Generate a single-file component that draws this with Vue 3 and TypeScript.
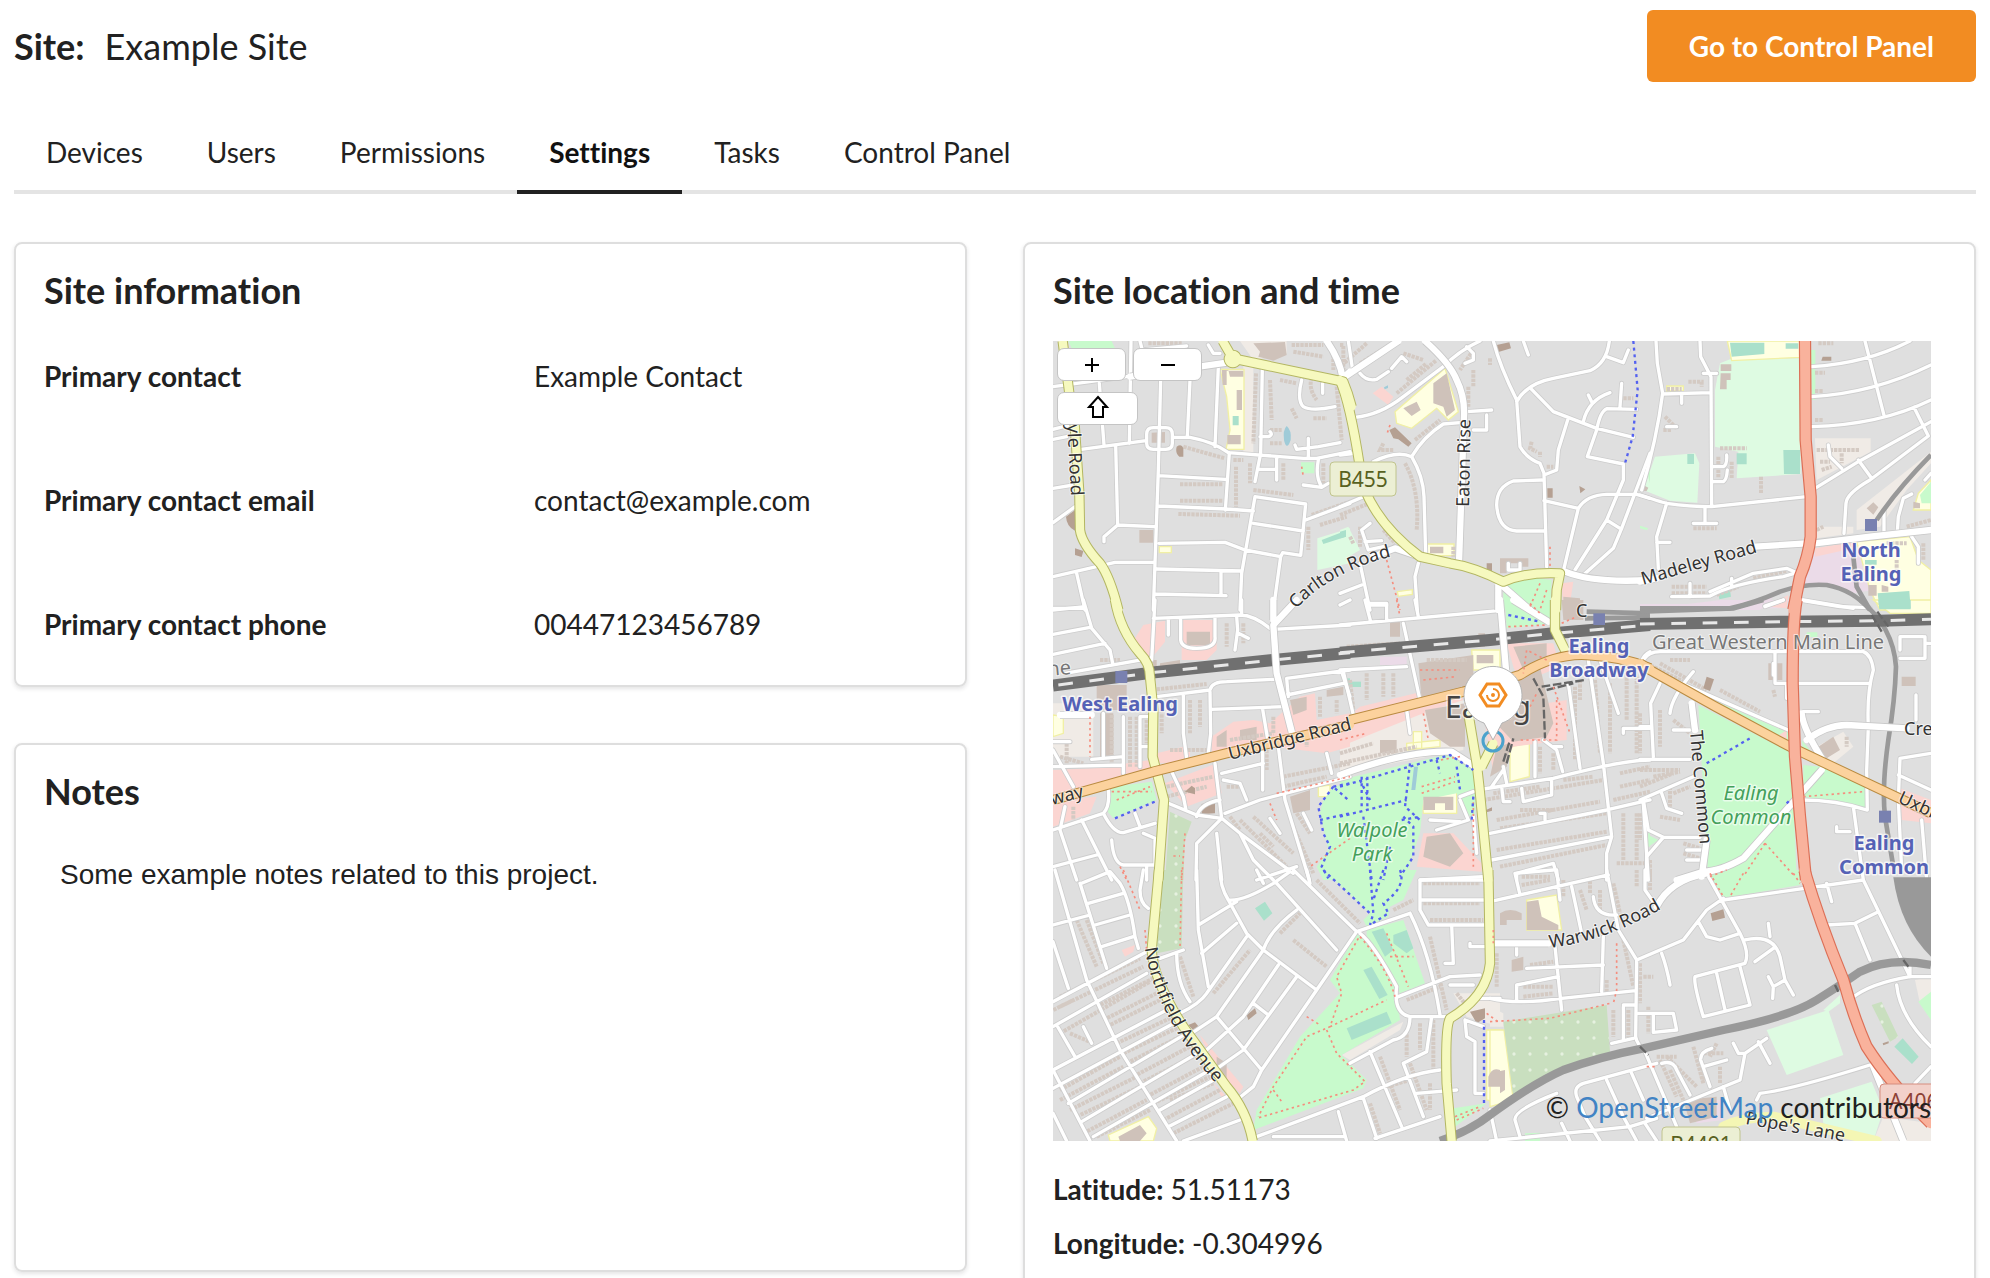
<script setup lang="ts">
import { ref } from 'vue'

const tabs: string[] = ['Devices', 'Users', 'Permissions', 'Settings', 'Tasks', 'Control Panel']
const active = ref('Settings')

const contact: { label: string; value: string }[] = [
  { label: 'Primary contact', value: 'Example Contact' },
  { label: 'Primary contact email', value: 'contact@example.com' },
  { label: 'Primary contact phone', value: '00447123456789' },
]

const notes = ref('Some example notes related to this project.')

// Drawing order of the base map, bottom to top.
const layers: string[] = [
  'land', 'lilac', 'pale', 'school', 'park', 'orchard', 'pitch', 'retail', 'water', 'building', 'terrace', 'landmark',
  'minor-case', 'minor', 'rail', 'mainline', 'mainline-dash', 'yard', 'street-case', 'street',
  'secondary-case', 'secondary', 'primary-case', 'primary', 'trunk-case', 'trunk',
  'footway', 'cycleway', 'station',
]

// The map is cut into sheets; every sheet holds one path per layer in its own coordinates.
interface Sheet {
  x: number
  y: number
  paths: Record<string, string>
}

const sheets: Sheet[] = [
  {
    x: -39,
    y: -33,
    paths: {
      park: 'M85 33H215L225 55H95ZM783 397h40v33h-40Z',
      pale: 'M832 625L930 595V700L832 720Z',
      land: 'M600 33H740V70L640 90ZM610 90H640V370H610Z',
      school: 'M540 118H612V358H558L570 300L560 200ZM358 650h36v18h-36Z',
      pitch: 'M845 630L915 603L918 620L850 642ZM578 258h18v28h-18Z',
      water: 'M740 288Q755 300 752 330Q740 365 732 330Q728 300 740 288Z',
      building:
        'M640 40L735 36L740 75L700 92L655 80L660 65ZM298 600h42v38h-42ZM545 120H565L570 140H610V122H560V165H548ZM590 180h16v60h-16ZM562 315h40v28h-40ZM335 308l40-2v32h-40Z',
      terrace:
        'M755 45H850M760 65L850 80M648 130L640 340M690 150L695 270M820 130Q800 170 830 210M890 170L905 330M430 350Q500 370 555 385M420 463H550M420 512H550M415 552L600 557M588 410V530M640 480L760 495M805 590V660M690 300H725M690 340H725M580 390H610M815 555L930 515M840 585L920 560M720 150L770 160M820 265h40M730 400v50M850 400v60M755 235l15 30M880 60v60M630 400v60M325 40h100',
      landmark: 'M78 560L105 540V602Q80 590 78 560ZM410 350q15-10 20 5v25h-12Q405 370 410 350ZM105 655l25 8l-5 18l-20-6Z',
      minor:
        'M39 170L550 100M273 33L268 340M362 150L355 420L340 840M450 150L442 320M178 160L192 345M124 358L318 332M340 293H377Q397 293 397 313V340Q397 358 377 358H340Q320 358 320 340V313Q320 293 340 293M397 322H450Q520 335 565 368L790 385H830L930 365M535 110L525 350M227 345L233 585L345 590M355 437L556 448M568 368L556 540M355 528L560 537L640 543M357 640L555 637L615 660L722 680L728 668L782 676L797 522L645 500L605 730L600 840M640 580L790 603M797 570L930 520M722 680L700 840M350 717L605 723M345 792L558 797M543 725V795M39 740L225 697H345M110 730L135 840M39 578L105 530M233 585L192 620V635M39 328L80 320M39 475L100 465M667 115L662 370L645 455M660 320H685Q700 315 690 305M655 418H710M710 380V450M805 325V385M765 345L770 358L835 350L900 338M835 390Q825 440 845 470M790 465L845 472L865 460M785 150Q770 210 790 230Q815 245 885 230M848 160V190M300 33L308 65M308 60L440 48M505 45L520 70H540M39 835L135 835M39 298L90 285',
      street: 'M860 33Q900 90 908 145L930 125M270 140L560 98',
      secondary:
        'M548 33L578 85L910 155Q925 190 935 230M68 33L88 190M104 285L118 490L120 600Q125 640 180 700Q210 740 235 840M578 75a12 12 0 1 0 1 0',
      footway: 'M785 410L790 440',
    },
  },
  {
    x: 861,
    y: -33,
    paths: {
      park: 'M490 770L560 740L635 750L630 840H490ZM920 420L930 400V460Z',
      pale: 'M0 600L25 590L60 660L0 695Z',
      pitch: 'M0 605L18 600V620L0 625Z',
      retail: 'M98 190L125 170L160 200L145 225ZM665 760L700 755L690 820L670 840Z',
      school: 'M165 245L315 115L355 245L325 270L290 235L215 295L170 280ZM262 642h80v35h-80ZM172 785l45-6v14l-42 6Z',
      water: 'M132 172l12-6v8l-10 4Z',
      building:
        'M280 160L320 130L345 240L320 260L310 230L280 220ZM190 235L230 215L242 240L215 258ZM270 650h40v20h-40ZM480 685H565V710H545V700H500V730H480ZM670 800L720 805V840H670Z',
      terrace:
        'M80 40L0 110M60 100L170 33M170 190L290 90M225 330L300 270M195 400Q240 480 230 600M0 555L100 515M60 590V650M130 600L165 640M340 650v30M130 340l-10 20h40M400 120v50M385 170v60M400 60l-40 60M450 85v20M850 205h30M575 335l-5 20l20 10M600 365v15M620 410h20M0 45H10V130M190 70L250 90M200 150l60-50M30 620l10 20',
      landmark: 'M148 300L165 292L215 340L205 350L175 328L160 325ZM470 45l38-8l5 18l-40 12ZM622 475h16v28h-16ZM718 468l18 10l-15 12ZM440 700h16v26h-16Z',
      minor:
        'M25 33L38 120M45 262Q120 255 190 200L310 110Q360 60 420 33M60 130Q80 155 110 148L145 125M215 380Q250 440 252 500L257 670M0 375L45 370M100 395Q170 360 215 380Q250 320 310 282L360 278M0 530L70 500M380 245L455 240M440 255V300H400M460 33Q480 110 530 210L540 350Q560 385 600 400L612 430L620 710M530 215Q560 160 640 145L750 122Q800 100 808 33M800 80L850 98L865 60M572 175L640 245L770 295L880 322M745 195L755 215M730 275Q745 210 810 188M845 160L840 230M890 238L800 236Q780 245 770 300L742 380L850 402V450L800 570L705 720M683 270L655 360L650 420L612 435M605 450L520 453Q470 470 470 525Q475 600 530 603H615M612 512L715 535Q740 495 800 493H890L930 505M715 535L672 715M930 370L845 595L820 655L730 735M800 570L840 595M60 700L90 840M235 700L225 740L232 840M0 790L65 765M90 580L65 600L85 660L130 650M75 635L125 632M155 115L185 80L200 95M550 33L565 75M375 100L400 90V70L380 50M505 700V720H540V700M85 825H140',
      street: 'M0 150L175 33M255 33Q330 100 350 150Q375 200 372 260L357 700M240 680L165 655L100 680M475 765V840M675 725Q760 760 930 750M490 770L570 840',
      secondary: 'M0 150Q30 220 58 400L75 480Q120 590 240 680L330 700Q400 710 490 755Q560 725 660 730L650 780L648 840',
      footway: 'M140 690L180 840M630 650V710M600 760L570 830M620 780L600 840M150 285l-10 30',
      cycleway: 'M880 33L893 180L878 320L855 400',
    },
  },
  {
    x: 1761,
    y: -33,
    paths: {
      land: 'M525 325H692V365L530 450ZM873 365L650 540V600L720 590L800 480L873 400ZM530 590H640V610L530 625Z',
      lilac: 'M520 670L650 655L700 780L640 790L560 765L480 760L510 720ZM0 822H260L400 800L360 840H0Z',
      retail: 'M525 655L645 635L640 655L525 680ZM385 825L445 795L440 830Z',
      pale: 'M240 100L270 88L480 85L482 432L290 445L295 365L225 350V180ZM45 380L165 370L178 400L172 518L90 512L10 480Z',
      school: 'M262 33H480V82L275 92ZM650 635L810 620L835 690L873 720V840H720L690 780ZM835 490L873 450V540H820ZM80 168h50v15h-50Z',
      park: 'M840 495L873 455V520H845ZM0 587l25 8l-5 6l-20-6ZM512 60h14v150h-10Z',
      pitch: 'M270 38H373V72L275 80ZM437 40h38v16h-38ZM430 360h50v72h-48ZM142 372h20v30h-20ZM290 370h30v33h-30ZM713 790L808 783L812 835H718ZM675 690h35v14h-35ZM235 785l35-5l3 20l-35 8Z',
      building: 'M242 103h32v20h-32ZM242 130h30v20h-12v28h-20ZM680 535l20-18l15 15l-15 22ZM685 765h25v32h-25ZM725 765l20 5v15h-20ZM10 465l15 8l-5 10h-12ZM820 515l20 5v15h-20Z',
      terrace: 'M80 177H125M145 155H185V170M75 260L110 295M70 300H95M530 360H660M540 395H570M605 370V400M545 420l30-10M160 595H230M95 770H200M340 745L440 722M230 795L295 770M95 790H200M235 380V445M275 395V445M240 355H320M525 128h30M525 183h25M525 270h25M535 40h45M363 440v50M800 590L873 570M740 640H800M770 690v30M850 640V690M700 720v30M530 600l20-10',
      landmark: 'M548 80h26v12h-30Z',
      minor:
        'M48 33L52 100L68 190Q50 330 5 480M180 33L182 80L213 140L215 530M68 192L213 188M125 195V220M0 495Q60 515 80 520Q150 530 215 530L500 500M80 520L50 620L55 715M50 637H90M195 535V575M160 580H230M215 410H250Q262 405 260 375M215 455H250Q260 450 262 420M515 110Q680 100 810 33M515 200Q700 190 873 105M515 290Q720 285 873 210M675 33L733 260M822 232L865 318L690 450Q620 490 618 520L612 610M525 475L655 395L873 275M655 390L695 445M565 345L570 380L605 415M95 800L210 798Q280 760 430 740L470 728L440 715L340 730L210 785M375 828L430 810M772 605L775 560L790 505L815 492M815 620L835 650V700M480 810L600 830L690 833M150 760V800M275 745V770M190 130H230M855 450L873 430M732 540V605M80 290H110',
      rail: 'M0 835H270Q340 820 420 785Q490 760 560 765Q640 780 690 840M873 375Q770 480 710 570M640 680L650 770L690 840',
      street: 'M0 755L50 745M345 650L500 640H525L690 620L873 600',
      trunk: 'M495 33L497 330L512 500V620Q505 680 480 740L460 840',
      station: 'M675 567h36v36h-36Z',
    },
  },
  {
    x: -39,
    y: 777,
    paths: {
      land: 'M39 310H160V470H39Z',
      retail:
        'M275 130L310 75L375 62V125L330 180ZM425 60H530V150L500 180H425ZM39 510L160 505L330 480L340 500L39 600ZM350 460L430 440L450 450V490H350ZM515 410L580 365L640 360L690 370L780 290L825 280L830 360L930 340V440L860 460L700 440L515 460ZM375 550L530 490L545 580L440 620ZM39 600L170 590L150 640L39 680Z',
      school: 'M39 345L70 350V400L39 410ZM835 560L870 555V590H835Z',
      park: 'M215 560L335 545L350 600L220 655L203 635ZM850 600L880 560L930 550V840H850L830 800L865 750L840 640Z',
      orchard: 'M390 635L455 665L435 720L430 840H375Z',
      pitch: 'M920 235h10v30h-10Z',
      building:
        'M440 95h70v40h-70ZM170 255H260V330H170ZM750 590L810 570V630L760 640ZM180 400V340H220V480H180ZM360 190L420 180V210L360 215ZM530 410L560 390V440H530ZM600 390L650 380V420H600ZM750 300L800 290V330L760 345ZM860 270L910 260V285L860 290ZM330 180h20v30h-20Z',
      terrace:
        'M215 345V490M270 350V500M290 350V500M320 360V430M365 330V400M450 300V400M480 300V380M560 70V140M610 70V130M350 268L500 252M570 420L700 400M600 660L740 800M640 650L760 760M730 530L930 490M760 680L820 820M80 430V490M380 560L520 530M380 590L500 560M660 700L700 740M570 650L600 690M730 560L860 530M60 470L130 490M390 450H500M800 400V440M840 290V350M890 300V340M700 350V400M180 180H240M560 560h50M680 450v60M770 640L810 700M100 620V660',
      landmark: 'M485 612L525 605V640L485 642ZM435 575l20-18l10 8v18Z',
      minor:
        'M39 30L135 20M130 0L155 85L210 150L218 190M39 103L150 82M39 163L195 130M345 0L335 180M340 55L600 45Q640 45 690 85M605 0V45M385 60V105M422 60V120Q425 145 470 145Q530 145 525 110V55M590 50L593 90L585 150M595 100L625 115M75 220L330 175M350 290L510 270Q515 245 560 245L700 238M430 285V400L440 475M510 275L512 400L505 460M515 328L730 320M668 328L685 430M668 440V570M190 340V470M250 350V520M300 350V500M300 350H325M300 440H325M155 478L250 470M250 495L39 500M39 450L100 560M39 690L190 640Q210 620 205 570M190 640Q220 700 250 698L345 670M215 720Q220 790 250 795H345V715L310 700M60 690L110 840M125 660L215 840M39 800L170 765M320 800V840M285 640L300 680M385 610L470 645L545 655L470 730L468 840M395 515L430 590L438 630M525 490L545 655L600 700L760 820M600 700L640 780L700 840M530 700L545 840M650 840L770 800M545 520L670 490M550 540L600 550L620 600M470 650Q480 610 540 600M555 640L660 600L930 530M715 440L735 600L808 840M745 290L740 235L930 210M740 285L910 250M905 215L930 290M860 460L875 520M690 655L720 700M700 88L930 75M39 425H90M60 690L75 620M790 640L815 690',
      street: 'M700 0V60M770 0L700 75L710 220L755 395M60 345H155',
      mainline: 'M39 257L345 217L700 180L930 158',
      'mainline-dash': 'M55 255L345 217L700 180L930 158',
      secondary: 'M225 0Q240 90 300 160Q330 190 330 230L340 330L338 470L372 600L355 840',
      primary: 'M39 600L340 515L560 460L930 375',
      footway: 'M150 350V470M215 575H335M230 600L330 560M435 700L425 840M690 610L710 660M710 580L930 530M930 715L810 800M240 800L260 840M400 768H420',
      cycleway: 'M880 560L835 620L850 700L870 740L845 800L865 835M840 660L930 640M225 655L345 605M880 560L930 550M885 565L925 600',
      station: 'M226 213h36v36h-36Z',
    },
  },
  {
    x: 861,
    y: 777,
    paths: {
      land: 'M0 380L60 360L370 300V450L0 520Z',
      retail:
        'M500 130H640L660 200L540 250L520 200ZM430 340L680 300V420L520 440L460 520ZM60 320L350 250L370 300L250 340L100 400L0 440V370ZM250 700L340 700L425 790V815L230 800Z',
      lilac: 'M120 170H200V195H120Z',
      park: 'M495 0H635V70L500 85ZM0 540L335 460L410 500L405 660L380 640L350 580L250 600L240 700L215 770L200 840H0ZM925 690h5v50h-5Z',
      school: 'M245 590L350 570V640L250 640ZM395 150H480V210H400ZM510 440L568 430V530L510 545ZM220 395h25v50h-25ZM200 430L300 420V440L200 450Z',
      pitch: 'M25 245h38v16h-38Z',
      water: 'M222 500H234L226 570H214Z',
      building:
        'M235 190L400 165V270L245 300ZM540 220L600 200L640 370L620 410L520 425L430 330ZM255 330L375 310V440H330L270 400ZM260 710L330 700L370 760L330 800L250 770ZM665 0H730V60H670ZM415 100h20v40h-20ZM120 420h50v40h-50ZM470 440L510 430L500 500L450 530ZM150 60h30v50h-30ZM410 165h50v25h-50ZM520 140L620 130V190L550 210ZM250 590h90v40h-25v-20h-30v20h-35Z',
      terrace:
        'M430 600L640 565L790 540M470 660L780 605M480 685L800 640M470 750L800 695M480 800L800 735M705 260V480M765 240L780 460M810 250V460M860 180V360M890 230V460M640 460V510M600 440V520M840 520L930 500M840 560L930 540M850 640V780M890 640V780M0 490L230 440M30 240L40 330M80 220V300M130 220V290M160 220V290M460 580L600 560M830 790H930M20 140L180 130M260 180H380M0 460L100 430M670 540L760 530M720 240V300M540 630H640M820 600L930 575',
      landmark: 'M438 630l18-8v10l-16 5Z',
      minor:
        'M75 0L92 65M0 75L475 32M190 70L240 300M225 0L235 50M0 210L200 200M10 215L40 345M200 330L210 400M360 590L400 575M410 570L640 535Q850 480 930 480M450 700L800 630L930 600M455 780L815 710M685 250L720 505M745 180L790 490L815 710L800 760V840M780 180L835 340M585 425V530M610 420L650 450L668 515M640 440H665M490 500L500 550M455 560L490 510M850 400V385H930M910 610L925 840M485 560L490 605H510M545 565L550 605L635 585V540M600 640H615V660M360 600L385 660L290 690M270 660L360 665M530 840V820L640 790L655 840M240 840L430 830M80 10H140V60M400 650L410 760M905 185Q910 165 930 155M0 15L30 0',
      rail: 'M740 35L930 40M735 55L930 52',
      street: 'M480 0L498 210M0 525Q200 450 335 455L405 500M520 0L625 65',
      mainline: 'M0 158L450 120L640 100L930 75',
      'mainline-dash': 'M0 158L450 120L640 100L930 75',
      yard: 'M580 235L610 290L615 415M605 260L735 240M620 270L700 250M500 490L520 415M490 485L510 420',
      secondary: 'M645 0V90L675 150M385 340L410 490L418 560L445 840M460 430L425 500',
      primary: 'M30 360L370 275L540 225Q640 160 740 165Q850 170 930 205',
      footway: 'M170 0L180 50M650 300V420L540 420M570 320L590 280M240 210H360M250 240L350 230M665 70L710 50M250 340L265 420M245 560L345 530M245 580L345 545M360 470L300 480M505 80L620 75M620 180L560 150L550 220M640 260L690 400M0 420L80 400M400 590V800M570 10L600 40',
      cycleway:
        'M0 560L330 465L400 510M210 490L195 620L240 660M65 530V620M82 530V620M0 650L200 600M350 500L360 570M400 590L395 660M190 650L220 680V770L180 830M70 650L95 840M150 740L130 840M505 45L600 65M60 540L90 600M185 660L240 650M290 480L300 520',
      station: 'M760 40h35v35h-35Z',
    },
  },
  {
    x: 1761,
    y: 777,
    paths: {
      land: 'M530 440L610 395L640 440L580 490Z',
      lilac: 'M240 0H450L420 25L0 30Z',
      school: 'M700 0H873V40H750Z',
      park: 'M175 315L455 460L470 840H205ZM490 495L545 500L680 560V625L490 590ZM150 270L450 400L445 425L180 295ZM485 420L510 450L490 450ZM25 705L55 720L25 740ZM500 97h32v14h-32Z',
      pitch: 'M715 0H812V28H718Z',
      retail: 'M780 565L873 600V670L785 660ZM410 410L440 390V420ZM370 18L440 0V25Z',
      building: 'M535 440L580 410L600 450L560 475ZM785 230h42v28h-42ZM385 190h42v50h-42Z',
      terrace: 'M20 190L140 250M60 190L200 270M240 270L360 335M90 180H150M0 340V460M60 330V440M100 360L150 400M0 510H120M40 530L120 515M0 560L100 520M100 580L150 560M60 650L120 660M0 640V720M30 780V840M130 730L180 745M130 760L180 775M400 270L405 290M90 560V620M620 410V440',
      landmark: 'M200 230l22 8l-12 35l-20-8Z',
      minor:
        'M10 180Q25 155 60 155H670Q695 165 700 210Q680 280 685 380L680 510L682 630M405 155V250H690M440 250V295M0 380H30M60 250L32 310L40 470M0 478H150M90 340Q95 290 160 215M0 600L160 530M10 600L25 690L70 712H180M70 712L20 770V840M65 580L80 625L125 640M490 335H535M780 175H855V110M855 130H873M780 110H850M780 110V150M873 460L780 475L775 600L785 810M775 525L873 570M640 620L670 840M590 680V695H630M845 660L860 840M828 285V360M485 600Q590 600 680 630M90 235L445 390M100 390H150M375 20L430 0M140 750H190M140 780H190M490 0L640 25M400 190V225',
      street: 'M155 310L165 390M200 720L185 830M500 420Q560 375 620 375L800 385M485 340Q490 390 555 490M545 510L310 775Q240 815 190 815L110 840',
      rail: 'M0 35L280 25L370 0M660 0Q760 80 768 200Q765 300 745 420Q725 560 735 650L760 800',
      mainline: 'M0 72L440 65L720 62L873 58',
      'mainline-dash': 'M0 72L440 65L720 62L873 58',
      primary: 'M0 190L30 210Q240 330 450 440L873 640',
      trunk: 'M470 0Q458 60 458 250L465 470L480 650L498 840',
      footway: 'M490 590L670 575M375 730L310 830M375 730L465 830M210 830L260 810',
      cycleway: 'M200 490L335 412M440 610L450 600',
      station: 'M717 632h36v36h-36Z',
      yard: 'M695 45L725 95M712 35L745 80',
    },
  },
  {
    x: -39,
    y: 1587,
    paths: {
      park: 'M850 0H1130L1090 90L1050 110L1045 140L980 170L970 150L990 130ZM980 180L1090 150L1155 340L1080 370Q1060 300 980 200ZM950 190L1040 260L1070 370L1080 450L905 555L980 630L970 655L640 780L650 720L780 500L900 370L870 330ZM1240 715L1340 700L1245 770Z',
      orchard: 'M370 0H430L425 235L350 250Z',
      pitch: 'M995 185l35-10l30 65l-25 20ZM1060 195l40-15l20 55l-20 15l-40-30ZM970 300l25-10l48 85l-25 12ZM920 475L1040 425L1055 460L935 510ZM645 115l30-20l22 35l-25 22Z',
      pale: 'M890 390L895 430L870 465L860 460ZM735 690L750 685L775 715L760 730Z',
      land: 'M905 555L1090 455L1080 480L930 570ZM1240 370H1380V470L1280 440Z',
      school: 'M205 795L325 740L350 775L340 813H210ZM1340 480H1380V700L1340 690Z',
      retail: 'M480 495L610 650L600 670L560 630L490 520ZM245 240L285 225L280 245L255 260ZM520 640L560 680L550 690Z',
      building: 'M235 800L300 765L320 790L300 813H240ZM1345 620Q1355 590 1380 600V650H1345ZM530 560L560 580V630L530 590Z',
      terrace:
        'M110 150L170 290M140 150L190 280M60 380L300 265M60 410L310 290M60 490L330 335M170 410L350 320M190 450L350 370M200 470L360 390M230 520L400 440M250 550L420 470M260 580L440 490M280 620L450 530M300 640L480 550M320 680L490 590M340 700L510 620M60 660L240 560M60 690L250 590M90 720L290 620M110 740L300 650M130 790L320 690M170 800L330 720M390 690L520 640M370 750L540 660M400 790L580 700M90 490L160 520M720 190L780 130M760 210L860 290M830 30L960 160M520 370L630 240M690 430L760 330M1060 120L1120 90M1170 200L1220 420M1100 480V560M1020 560L1080 720M1040 650L1110 630M1110 580L1160 720M1140 460V540M1180 450V600M1150 40H1320M1150 100H1320M1170 150H1330M1100 390L1200 350M990 700L1020 790M1170 640V720M420 260L460 380M40 420L100 390M1250 370L1290 420',
      landmark: 'M620 435l25-20l5 15l-25 20ZM1290 425l45-10v30l-25 15ZM445 465l20-8l10 12l-15 12Z',
      minor:
        'M45 0L140 330L240 540L410 813M39 215L85 355M125 40L210 5L240 40Q270 90 285 200L295 235M39 165L150 135M145 100L250 70M165 165L270 135M185 230L280 200M120 40L200 295M39 395L320 245M39 470L320 310M39 600L380 420M39 655L410 455M85 700L440 490M125 755L480 545M160 800L510 600M360 720L530 625M385 770L560 680M430 813L600 750M50 465L105 560M39 600L150 813M39 730L80 813M130 470L155 520M310 0L300 60Q300 100 325 115M360 265L430 240M410 250Q410 340 450 395M470 0L475 180L505 350M475 165L590 95M540 0Q540 50 565 90Q610 95 700 40L750 5M565 90L620 190L670 240L830 360M710 40L890 240M650 0L670 40M670 240Q690 180 770 120M485 250L590 160M620 200L500 370Q480 400 420 430M670 240L530 440L440 500M530 440L665 600M715 285L610 440L500 540M770 320L610 540L510 610M830 360L665 600L640 650L590 690M950 185L830 360M640 400L685 435M760 0L950 185L1110 130M800 0L810 40M960 190Q1000 220 1070 350Q1060 430 1110 440H1220M1075 380L1230 320L1320 315M1110 130Q1170 250 1200 435M1140 120V30H1345M1140 90H1340M1140 120L1165 165H1345M1235 165L1240 280H1215M1290 230H1340M1110 440Q1110 500 1060 510L930 580M650 800L970 680Q1100 610 1200 600M990 545L1085 770M970 685L1010 805M895 725L920 813M1090 580L1150 740M1090 580L1160 545L1175 440M1130 670L1250 660M1005 805L1200 740M700 800H910M1275 450L1280 500L1305 515V670H1330M1230 345H1300M1320 385H1380M1275 450L1330 470M1290 230V220',
      secondary: 'M357 0L335 240Q340 330 430 470L560 650Q620 720 638 813M1345 0L1350 280Q1340 380 1230 445Q1215 470 1220 640L1235 813',
      footway:
        'M250 0L300 120M425 0L420 235M315 180L320 240M955 205L890 320L905 370L870 470L800 500L700 650L655 740M870 470L1040 390M860 480L890 550L975 635L940 660L650 745M1040 190L1105 350M960 200Q1040 290 1065 380M1050 260H1120M800 440L840 465M700 660L725 695M1245 740L1320 710M1360 180V220M1250 750L1330 715M1340 430L1380 460',
      cycleway: 'M850 0L990 130M990 0L1000 130L990 165M1030 0L1000 90M1080 0Q1100 50 1030 100L1045 130L990 165M1332 450V700',
    },
  },
  {
    x: 1311,
    y: 1587,
    paths: {
      land: 'M0 410L40 430L40 470H0ZM1275 330L1323 320V380L1290 400ZM1180 740L1323 760V813H1150Z',
      lilac: 'M600 690H700V750L620 760Z',
      park: 'M640 0H935L930 45L700 85L660 40ZM1285 395L1323 365V450ZM105 790L150 788V813H105Z',
      pale: 'M830 480L1015 420L1060 555L890 615ZM1000 420L1050 375V400L1015 425ZM990 685L1145 635L1180 720L1150 813L1000 760Z',
      orchard: 'M40 455L350 405L360 545L200 600L70 680ZM1145 405L1175 395L1225 500L1200 515Z',
      pitch: 'M1213 530l25-25l48 55l-20 22Z',
      school: 'M0 480H42L70 690L0 710ZM110 90L200 75L215 180H110Z',
      building: 'M110 95L145 90L155 140L205 165V180H110ZM30 130Q60 110 95 130V150H50V165H30ZM0 610L45 600V660L30 670V640H0ZM65 270L100 260V300L65 305ZM580 690L680 680V740L600 760Z',
      terrace:
        'M95 20H180M95 45L180 30M220 30V80M270 60L290 120M330 60V120M370 40L390 130M440 0V50M480 0V60M120 285L190 275M100 350H190M100 380L190 370M350 330V370M400 210L430 350M370 420V500M415 420V500M450 280V400M475 410V490M510 570L560 680M530 560L620 650M610 530L640 640M680 520L660 560M640 580V630M690 590V640M500 560H560M640 550H700M540 600L580 690M460 320H490M20 250V350M300 20V70',
      landmark: 'M662 130l38-12l5 25l-38 10ZM1178 520l18-6v6l-16 6Z',
      minor:
        'M75 10L90 75M75 10L190 0M0 95L355 15M200 0L210 90M245 50L275 190M350 0L385 180L440 270L437 500Q440 520 465 545L560 770M310 80Q315 140 380 135M465 0V60L500 110M195 230L215 420M340 200L335 365M110 295L340 285M80 395V345L205 320M0 385Q80 405 215 385L437 362M80 230V255M440 270L580 210L650 120L700 85M650 10L750 190Q780 250 765 280L615 320Q610 340 640 440L780 405L750 290M680 310L705 420M625 155L650 200L690 210L750 190M765 210Q850 190 870 260L885 330L850 350L848 385M835 160L840 200M850 235L795 275M885 330L910 375M835 320L850 350M515 250Q530 290 540 345M700 90L1120 30L1260 320M1010 40L1025 95M1010 165L1095 160L1165 125M1095 160L1140 270M1085 385Q1140 340 1260 320V290M1220 345Q1230 440 1323 530M400 405H437M400 410V510M365 520L430 505M445 430H550L560 480L490 487V430M515 580Q550 570 560 600L600 675M260 680Q250 650 280 640L500 580M350 630L400 740M425 610L460 690M470 745L750 630L765 550L830 505M730 520L745 550H765M805 515L840 580M665 535Q630 545 632 570L660 650M640 590L710 570M700 650L720 720M800 690L810 670Q900 660 1140 585M75 750Q70 720 200 670M75 750L90 800M0 813L420 770M215 760L240 813M285 740L330 813M400 740L440 813M420 770L500 745M465 760L500 813M0 720L20 813M1275 640L1323 590M260 680L285 740M1260 320H1323',
      yard: 'M450 530L475 555M1240 270L1255 290M1035 345L1045 365M1068 330L1075 350',
      street: 'M0 220H175M500 110Q540 30 650 10M1150 590L1240 813',
      trunk: 'M943 0Q990 160 1060 330Q1090 440 1130 530Q1200 640 1323 760',
      footway: 'M380 220V360L370 400M0 455L180 445L360 400M660 10L700 80M760 10L720 80M910 10L930 40M470 590H500',
    },
  },
]

const zoom = ref(14)
</script>

<template>
  <main class="page">
    <header class="top">
      <h1 class="title"><b>Site:</b><span>Example Site</span></h1>
      <button type="button" class="cta">Go to Control Panel</button>
    </header>

    <nav class="tabs" aria-label="Site sections">
      <a
        v-for="tab in tabs"
        :key="tab"
        href="#"
        class="tab"
        :class="{ active: tab === active }"
        @click.prevent="active = tab"
        >{{ tab }}</a
      >
    </nav>

    <div class="columns">
      <div class="column">
        <section class="card">
          <h2>Site information</h2>
          <dl class="facts">
            <div v-for="item in contact" :key="item.label" class="fact">
              <dt>{{ item.label }}</dt>
              <dd>{{ item.value }}</dd>
            </div>
          </dl>
        </section>

        <section class="card notes-card">
          <h2><label for="notes">Notes</label></h2>
          <textarea id="notes" v-model="notes" class="notes"></textarea>
        </section>
      </div>

      <section class="card location">
        <h2>Site location and time</h2>
        <div class="map">
          <svg class="canvas" viewBox="0 0 878 800" preserveAspectRatio="xMidYMid slice" role="img" aria-label="Map of Ealing">
            <defs>
              <pattern id="trees" width="48" height="48" patternUnits="userSpaceOnUse">
                <rect width="48" height="48" fill="#c9dfbf" />
                <circle cx="24" cy="24" r="5" fill="#e6f1e0" />
              </pattern>
              <path id="carlton" d="M1296 609Q1330 573 1386 558" />
              <path id="northfield" d="M1145 948Q1150 985 1174 1027Q1192 1058 1222 1090" />
              <path id="warwick" d="M1550 948Q1610 940 1666 906" />
            </defs>
            <rect width="878" height="800" fill="#dfdfdf" />
            <g transform="scale(.33333)">
              <g v-for="layer in layers" :key="layer" :class="layer">
                <g v-for="(s, i) in sheets" :key="i" :transform="`translate(${s.x} ${s.y})`">
                  <path v-if="s.paths[layer.replace('-case', '')]" :d="s.paths[layer.replace('-case', '')]" />
                </g>
                <path
                  v-if="layer === 'rail'"
                  class="branch"
                  d="M1161 2400Q1250 2370 1311 2322Q1441 2227 1531 2187Q1641 2147 1771 2122L2011 2067Q2211 2027 2291 1977Q2371 1927 2421 1892Q2511 1847 2634 1872"
                />
                <path v-if="layer === 'rail'" class="depot" d="M2521 1609H2634V1847Q2541 1757 2521 1609Z" />
                <path v-if="layer === 'primary'" class="popes" d="M2011 2357Q2071 2327 2161 2327L2471 2400" />
              </g>
            </g>
            <g class="labels" transform="translate(-1053 -341)">
              <rect class="shield" x="1330" y="462" width="66" height="34" rx="4" />
              <text class="shield-text" x="1363" y="487">B455</text>
              <rect class="shield" x="1662" y="1127" width="78" height="34" rx="4" />
              <text class="shield-text" x="1701" y="1152">B4491</text>
              <rect class="shield trunk-shield" x="1880" y="1084" width="70" height="34" rx="4" />
              <text class="shield-text trunk-text" x="1889" y="1109">A406</text>

              <text class="road" text-anchor="end" transform="translate(1071 496) rotate(87)">Argyle Road</text>
              <text class="road" transform="translate(1469 507) rotate(-89)">Eaton Rise</text>
              <text class="road"><textPath href="#carlton">Carlton Road</textPath></text>
              <text class="road" transform="translate(1643 585) rotate(-16)">Madeley Road</text>
              <text class="road" transform="translate(1230 760) rotate(-14)">Uxbridge Road</text>
              <text class="road" transform="translate(1052 805) rotate(-14)">way</text>
              <text class="road" transform="translate(1690 731) rotate(85)">The Common</text>
              <text class="road" x="1904" y="735">Crescent</text>
              <text class="road" transform="translate(1897 802) rotate(25)">Uxbridge Road</text>
              <text class="road"><textPath href="#northfield">Northfield Avenue</textPath></text>
              <text class="road"><textPath href="#warwick">Warwick Road</textPath></text>
              <text class="road" transform="translate(1745 1124) rotate(10)">Pope's Lane</text>
              <text class="road" x="1576" y="617">C</text>
              <text class="line" x="1652" y="649">Great Western Main Line</text>
              <text class="line" transform="translate(1048 676) rotate(-5)">ne</text>

              <text class="stop"><tspan x="1871" y="557">North</tspan><tspan x="1871" y="581">Ealing</tspan></text>
              <text class="stop"><tspan x="1599" y="653">Ealing</tspan><tspan x="1599" y="677">Broadway</tspan></text>
              <text class="stop"><tspan x="1884" y="850">Ealing</tspan><tspan x="1884" y="874">Common</tspan></text>
              <text class="stop" x="1120" y="711">West Ealing</text>
              <text class="green"><tspan x="1372" y="837">Walpole</tspan><tspan x="1372" y="861">Park</tspan></text>
              <text class="green"><tspan x="1751" y="800">Ealing</tspan><tspan x="1751" y="824">Common</tspan></text>
              <text class="town" x="1488" y="718">Ealing</text>
            </g>

            <g transform="translate(440 400)">
              <circle r="10" fill="none" stroke="#4ba2cc" stroke-width="3" />
              <path
                d="M0-1L-9-18A29 29 0 1 1 9-18Z"
                fill="#fff"
                stroke="#b5b5b5"
                stroke-width="1"
                stroke-linejoin="round"
              />
              <g fill="none" stroke="#f28c22" stroke-width="3">
                <path d="M-13-46L-6-57H6L13-46L6-35H-6Z" />
                <path d="M0-52A6 6 0 1 1-6-46" stroke-width="2" />
              </g>
              <circle cy="-46" r="2" fill="#f28c22" />
            </g>
          </svg>

          <div class="controls">
            <div class="zoom">
              <button type="button" class="map-btn" aria-label="Zoom in" @click="zoom++">
                <svg width="16" height="16" viewBox="0 0 16 16"><path d="M8 1V15M1 8H15" /></svg>
              </button>
              <button type="button" class="map-btn" aria-label="Zoom out" @click="zoom--">
                <svg width="16" height="16" viewBox="0 0 16 16"><path d="M1 8H15" /></svg>
              </button>
            </div>
            <button type="button" class="map-btn north" aria-label="Reset north">
              <svg width="24" height="24" viewBox="0 0 24 24"><path d="M12 2L21 12H17V22H7V12H3Z" /></svg>
            </button>
          </div>
          <p class="credit">© <a href="#">OpenStreetMap</a> contributors</p>
        </div>
        <p class="coord"><b>Latitude:</b> 51.51173</p>
        <p class="coord"><b>Longitude:</b> -0.304996</p>
      </section>
    </div>
  </main>
</template>

<style>
body {
  margin: 0;
  background: #fff;
}
</style>

<style scoped>
.page {
  box-sizing: border-box;
  height: 100vh;
  overflow: hidden;
  padding: 10px 14px 0;
  font-family: Lato, 'Liberation Sans', sans-serif;
  font-size: 28px;
  line-height: 34px;
  font-variant-ligatures: none;
  color: #212121;
}
.top {
  display: flex;
  justify-content: space-between;
  align-items: center;
}
.title {
  display: flex;
  gap: 20px;
  margin: 0;
  font-size: 36px;
  line-height: 43px;
  font-weight: 400;
}
.title b {
  font-weight: 700;
}
.cta {
  height: 72px;
  padding: 0 42px;
  border: 0;
  border-radius: 6px;
  background: #f28c22;
  color: #fff;
  font: 700 28px/34px Lato, sans-serif;
}
.tabs {
  display: flex;
  margin-top: 35px;
  box-shadow: inset 0 -4px #e4e4e4;
}
.tab {
  padding: 18px 32px 21px;
  border-bottom: 4px solid transparent;
  color: #212121;
  text-decoration: none;
}
.tab.active {
  border-color: #212121;
  color: #111;
  font-weight: 700;
}
.columns {
  display: grid;
  grid-template-columns: 1fr 1fr;
  gap: 56px;
  margin-top: 48px;
}
.column {
  display: flex;
  flex-direction: column;
  gap: 56px;
}
.card {
  padding: 25px 28px 44px;
  border: 2px solid #dedede;
  border-radius: 8px;
  box-shadow: 0 2px 4px rgba(34, 36, 38, 0.12);
}
h2 {
  margin: 0;
  font-size: 36px;
  line-height: 43px;
  font-weight: 700;
}
.facts {
  display: flex;
  flex-direction: column;
  gap: 90px;
  margin: 47px 0 0;
}
.fact {
  display: grid;
  grid-template-columns: 490px 1fr;
}
dt {
  font-weight: 700;
}
dd {
  margin: 0;
}
.notes-card {
  padding-bottom: 28px;
}
.notes {
  display: block;
  box-sizing: border-box;
  width: 100%;
  height: 400px;
  margin-top: 29px;
  padding: 16px;
  border: 0;
  background: transparent;
  color: #212121;
  font: 28px/34px 'Liberation Sans', Arial, sans-serif;
  resize: none;
}
.location {
  padding: 25px 43px 64px 28px;
}
.map {
  position: relative;
  height: 800px;
  margin: 29px 0 31px;
  overflow: hidden;
}
.canvas {
  display: block;
  width: 100%;
  height: 100%;
}
.controls {
  position: absolute;
  top: 7px;
  left: 4px;
  display: flex;
  flex-direction: column;
  gap: 11px;
}
.zoom {
  display: flex;
  gap: 7px;
}
.map-btn {
  display: flex;
  align-items: center;
  justify-content: center;
  width: 69px;
  height: 33px;
  padding: 0;
  border: 1px solid #c4c4c4;
  border-radius: 7px;
  background: #fff;
}
.map-btn path {
  fill: none;
  stroke: #000;
  stroke-width: 2;
}
.north {
  width: 81px;
  padding-bottom: 3px;
}
.credit {
  position: absolute;
  right: 0;
  bottom: 17px;
  margin: 0;
  white-space: nowrap;
}
.credit a {
  color: #4183c4;
  text-decoration: none;
}
.coord {
  margin: 0 0 20px;
}

/* Base map */
.land { fill: #f0ebe6; }
.lilac { fill: #ebdbe8; }
.pale { fill: #defbe2; }
.school { fill: #ffffe2; stroke: #f1f0a4; stroke-width: 4; }
.park { fill: #c8facc; }
.orchard { fill: url(#trees); }
.pitch { fill: #aae0cb; }
.retail { fill: #fbd5d1; }
.water { fill: #9fcbd8; }
.building { fill: #cfc2ba; }
.terrace { fill: none; stroke: #d4cac3; stroke-width: 12; stroke-dasharray: 10 3; }
.landmark { fill: #b5a092; }
.minor-case { fill: none; stroke: #cdcdcd; stroke-width: 15; stroke-linecap: round; stroke-linejoin: round; }
.minor { fill: none; stroke: #fff; stroke-width: 10; stroke-linecap: round; stroke-linejoin: round; }
.street-case { fill: none; stroke: #c8c8c8; stroke-width: 24; stroke-linejoin: round; }
.street { fill: none; stroke: #fff; stroke-width: 19; stroke-linecap: round; stroke-linejoin: round; }
.rail { fill: none; stroke: #999; stroke-width: 14; }
.rail .branch { stroke-width: 25; }
.rail .depot { fill: #999; stroke: none; }
.mainline { fill: none; stroke: #707070; stroke-width: 36; }
.mainline-dash { fill: none; stroke: #e8e8e8; stroke-width: 9; stroke-dasharray: 44 50; }
.yard { fill: none; stroke: #666; stroke-width: 7; stroke-dasharray: 26 8; }
.secondary-case { fill: none; stroke: #b3b662; stroke-width: 31; stroke-linejoin: round; }
.secondary { fill: none; stroke: #f6f9bf; stroke-width: 25; stroke-linecap: round; stroke-linejoin: round; }
.primary-case { fill: none; stroke: #b98b40; stroke-width: 31; stroke-linejoin: round; }
.primary { fill: none; stroke: #fcd29d; stroke-width: 25; stroke-linecap: round; stroke-linejoin: round; }
.primary .popes { stroke: #f4f6b4; stroke-width: 30; }
.trunk-case { fill: none; stroke: #dc6f56; stroke-width: 37; }
.trunk { fill: none; stroke: #f9b29c; stroke-width: 30; stroke-linecap: round; }
.footway { fill: none; stroke: #f58d7e; stroke-width: 5; stroke-dasharray: 7 10; }
.cycleway { fill: none; stroke: #5461f0; stroke-width: 7; stroke-dasharray: 9 11; }
.station { fill: #7981b0; }

.labels text {
  font-family: 'Noto Sans', 'Open Sans', sans-serif;
  paint-order: stroke;
  stroke-linejoin: round;
}
.labels .road { font-size: 18px; fill: #333; stroke: rgba(255, 255, 255, 0.6); stroke-width: 2px; }
.labels .line { font-size: 20px; fill: #777; stroke: rgba(255, 255, 255, 0.6); stroke-width: 2px; }
.labels .stop { font-size: 20px; font-weight: 700; fill: #5562b6; stroke: rgba(255, 255, 255, 0.7); stroke-width: 3px; text-anchor: middle; }
.labels .green { font-size: 20px; font-style: italic; fill: #43a05a; stroke: rgba(255, 255, 255, 0.6); stroke-width: 3px; text-anchor: middle; }
.labels .town { font-size: 30px; fill: #444; stroke: rgba(255, 255, 255, 0.6); stroke-width: 3px; text-anchor: middle; }
.shield { fill: #ecefd4; stroke: #c0c48e; stroke-width: 1px; }
.labels .shield-text { font-size: 21px; fill: #58611f; text-anchor: middle; }
.labels .trunk-shield { fill: #f2d1ca; stroke: #d68d7e; }
.labels .trunk-text { fill: #8d4035; text-anchor: start; }
</style>
